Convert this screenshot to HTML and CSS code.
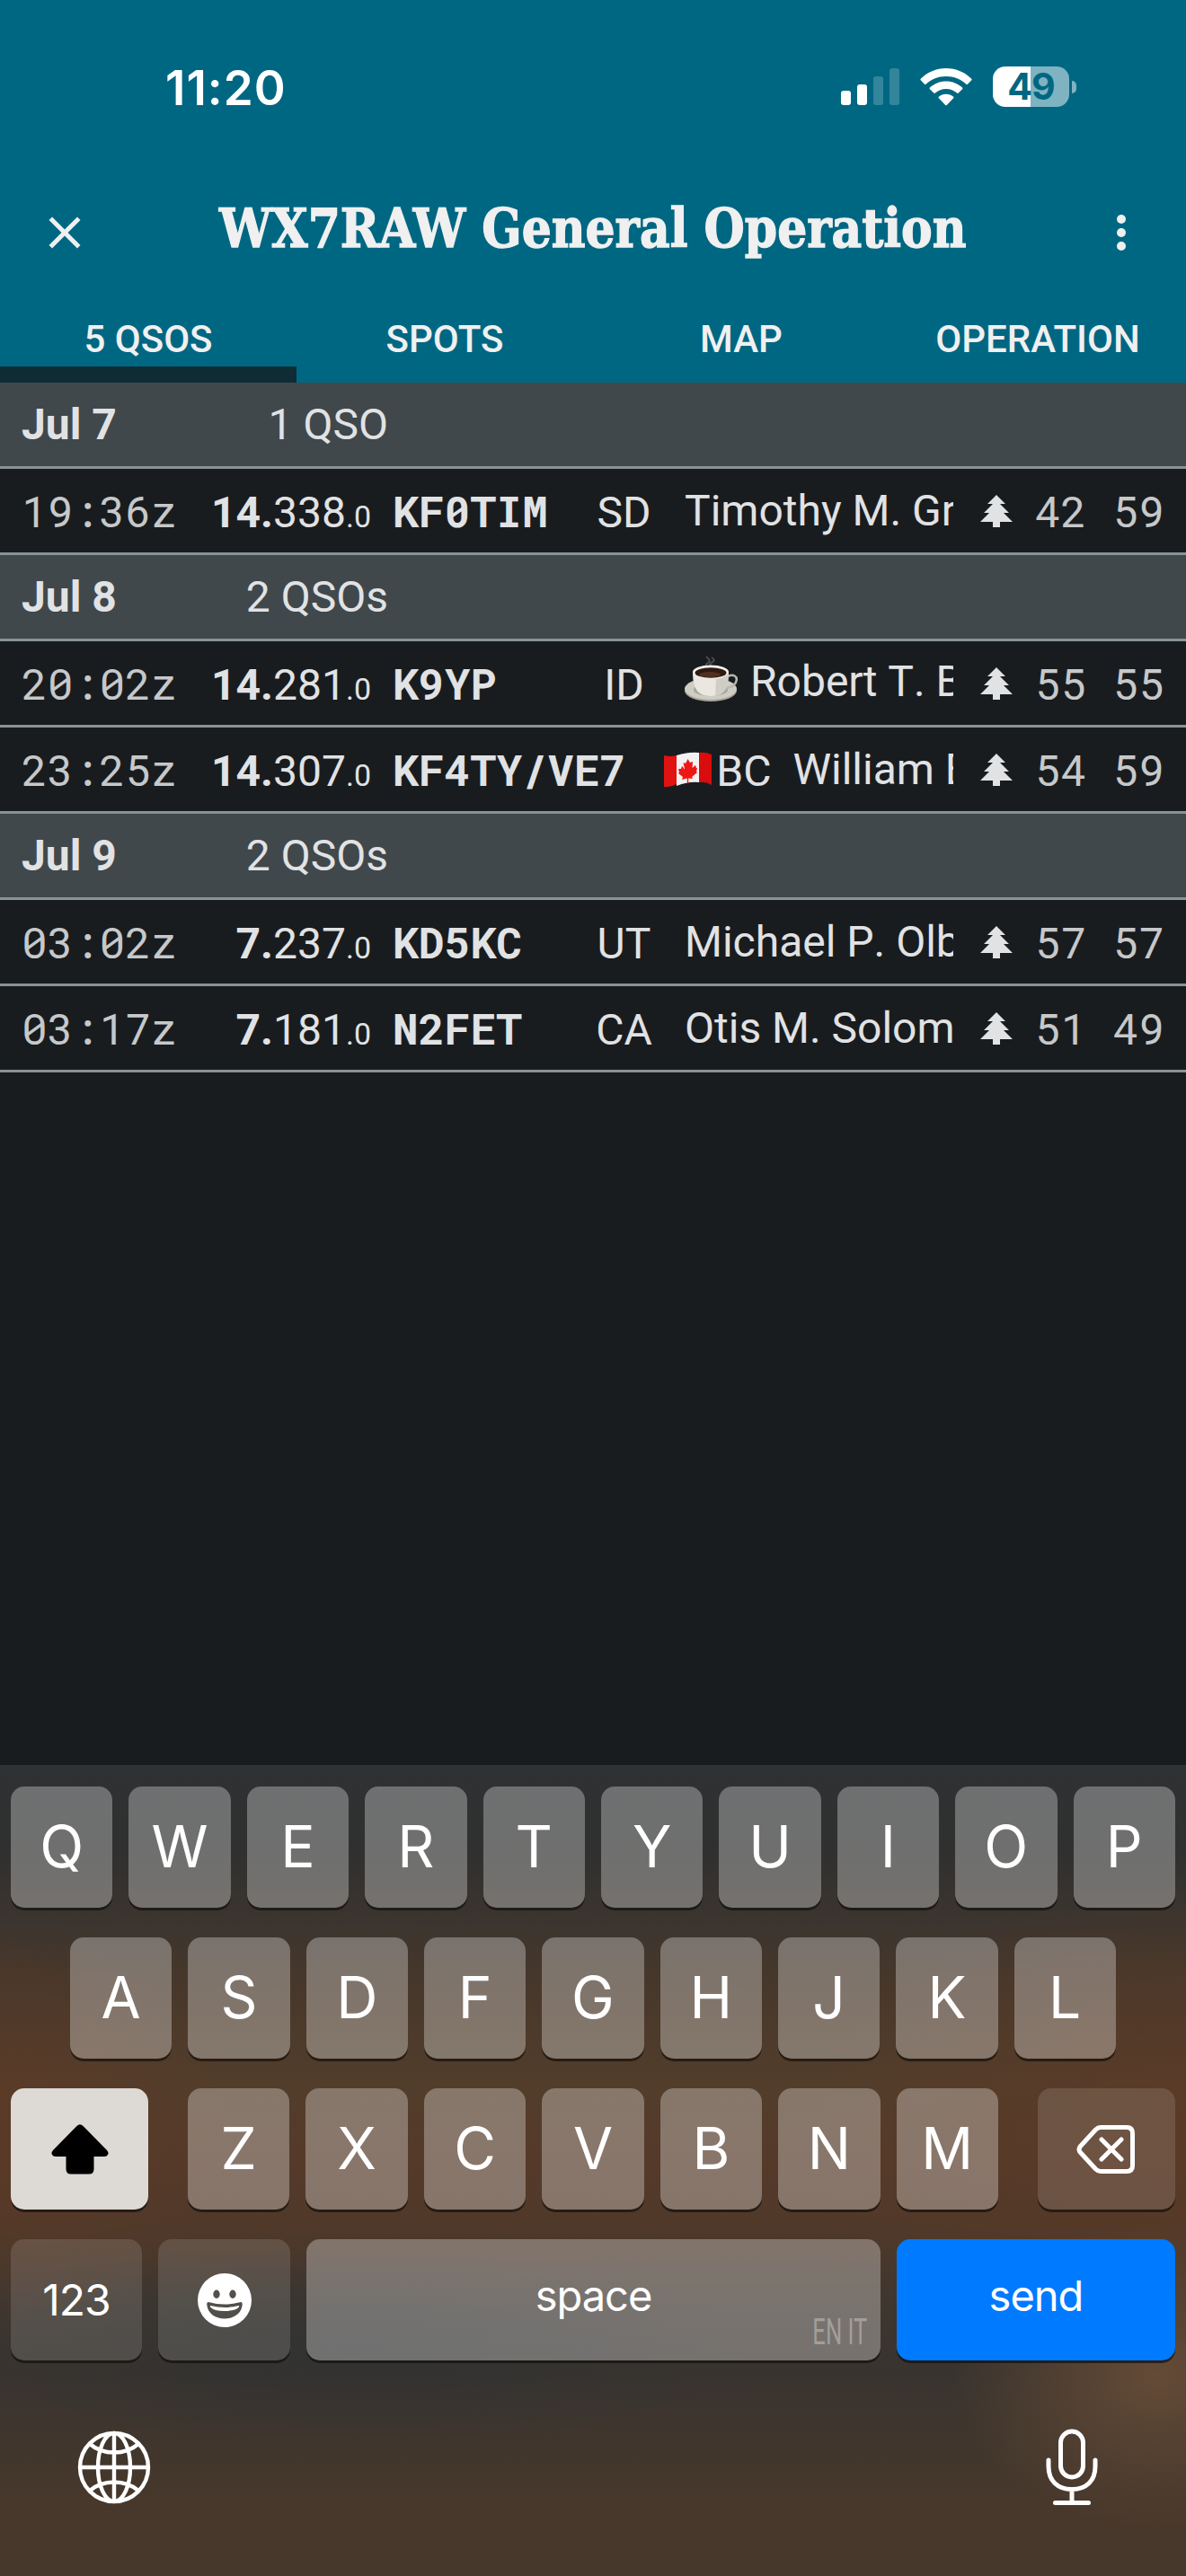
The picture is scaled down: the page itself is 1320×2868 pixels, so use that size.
FILE: index.html
```html
<!DOCTYPE html>
<html lang="en">
<head>
	<meta charset="UTF-8">
	<title>WX7RAW General Operation</title>
	<link rel="stylesheet" href="styles.css">
</head>
<body>

	<!-- shared icons -->
	<svg class="defs">
		<symbol id="icon-tree" viewBox="0 0 24 24"><path d="M10,21V18H3L8,13H5L10,8H7L12,3L17,8H14L19,13H16L21,18H14V21H10Z"/></symbol>
	</svg>

	<div class="header">
		<div class="status-bar">
			<span class="status-time">11:20</span>
			<div class="status-icons">
				<svg class="icon-signal" width="66" height="42" viewBox="0 0 66 42">
					<rect x="0" y="25" width="11" height="16" rx="3"/>
					<rect x="18" y="18" width="11" height="23" rx="3"/>
					<rect class="off" x="36" y="9" width="11" height="32" rx="3"/>
					<rect class="off" x="54" y="0" width="11" height="41" rx="3"/>
				</svg>
				<svg class="icon-wifi" width="58" height="42" viewBox="0 0 58 42">
					<path d="M29 0C18 0 8 4.500 .700 11.700Q0 12.500 .700 13.300L5 17.700Q5.800 18.400 6.600 17.700C12.500 12 20.300 8.900 29 8.900S45.500 12 51.400 17.700Q52.200 18.400 53 17.700L57.300 13.300Q58 12.500 57.300 11.700C50 4.500 40 0 29 0Z"/>
					<path d="M29 14.500C22 14.500 15.600 17.200 10.900 21.600Q10.100 22.400 10.900 23.200L15.300 27.600Q16.100 28.300 16.900 27.600C20.100 24.700 24.300 23 29 23S37.900 24.700 41.100 27.600Q41.900 28.300 42.700 27.600L47.100 23.200Q47.900 22.400 47.100 21.600C42.400 17.200 36 14.500 29 14.500Z"/>
					<path d="M29 28.800C25.800 28.800 23 29.900 20.800 31.700Q20 32.500 20.800 33.300L28.200 40.900Q29 41.600 29.800 40.900L37.200 33.300Q38 32.500 37.200 31.700C35 29.900 32.200 28.800 29 28.800Z"/>
				</svg>
				<div class="battery"><span class="battery-level">49</span></div>
			</div>
		</div>

		<div class="title-bar">
			<svg class="icon-btn" viewBox="0 0 24 24"><path d="M19,6.410L17.590,5L12,10.590L6.410,5L5,6.410L10.590,12L5,17.590L6.410,19L12,13.410L17.590,19L19,17.590L13.410,12L19,6.410Z"/></svg>
			<h1 class="title"><span>WX7RAW General Operation</span></h1>
			<svg class="icon-btn" viewBox="0 0 24 24"><circle cx="12" cy="6" r="2"/><circle cx="12" cy="12" r="2"/><circle cx="12" cy="18" r="2"/></svg>
		</div>

		<div class="tabs">
			<a class="tab active">5 QSOS</a>
			<a class="tab">SPOTS</a>
			<a class="tab">MAP</a>
			<a class="tab">OPERATION</a>
		</div>
	</div>

	<div class="log">
		<div class="day"><b>Jul 7</b><span class="count">1 QSO</span></div>
		<div class="qso">
			<span class="time">19:36z</span>
			<span class="freq"><b>14.</b>338<small>.0</small></span>
			<span class="call">KF0TIM</span>
			<span class="state">SD</span>
			<span class="name">Timothy M. Gr</span>
			<svg class="tree"><use href="#icon-tree"/></svg>
			<span class="rst">42</span><span class="rst">59</span>
		</div>
		<div class="day"><b>Jul 8</b><span class="count">2 QSOs</span></div>
		<div class="qso">
			<span class="time">20:02z</span>
			<span class="freq"><b>14.</b>281<small>.0</small></span>
			<span class="call">K9YP</span>
			<span class="state">ID</span>
			<span class="name with-icon">
				<svg class="coffee" viewBox="0 0 60 52">
					<path d="M25 14Q22 10 26 8T24 1M29 13Q27 9 31 7T30 2" fill="none" stroke="#4a4b4d" stroke-width="2"/>
					<ellipse cx="29" cy="39" rx="29" ry="12" fill="#a9a59b"/>
					<ellipse cx="29" cy="37" rx="29" ry="12" fill="#cfccc3"/>
					<ellipse cx="29" cy="38" rx="19" ry="7" fill="#aaa69c"/>
					<path d="M48 23C62 17 61 36 45 36" fill="none" stroke="#b9b6ad" stroke-width="2.500"/>
					<path d="M9 18C9 36 14 45 29 45S49 36 49 18Z" fill="#e9e7e0"/>
					<path d="M35 26Q45 25 49 18C49 36 44 43 34 45Z" fill="#d0cdc5"/>
					<ellipse cx="29" cy="18" rx="20" ry="7.500" fill="#f2f0eb"/>
					<ellipse cx="29" cy="19" rx="17.500" ry="5.800" fill="#2e1a10"/>
					<ellipse cx="28" cy="21" rx="12" ry="3" fill="#51301e"/>
				</svg>Robert T. B</span>
			<svg class="tree"><use href="#icon-tree"/></svg>
			<span class="rst">55</span><span class="rst">55</span>
		</div>
		<div class="qso">
			<span class="time">23:25z</span>
			<span class="freq"><b>14.</b>307<small>.0</small></span>
			<span class="call">KF4TY/VE7</span>
			<span class="state with-flag">
				<svg class="flag" viewBox="0 0 53 40">
					<path d="M0 4Q7 6 14 4V36Q7 40 0 39Z" fill="#e01212"/>
					<path d="M14 4Q26 0 39 1V34Q27 33 14 38Z" fill="#f2f2f2"/>
					<path d="M39 1Q46 0 53 3V37Q46 33 39 34Z" fill="#d90d0d"/>
					<path d="M26.500 8L29 12L32 11L31.500 18L35 15L36 18L37 18L36 22L37 23L31 28L32 30L27.200 29.500V35H25.800V29.500L20 31L21 28L16 24L17 23L16 19L19 19L20 16L23 19L21.500 12L24 13Z" fill="#f01616"/>
				</svg>BC</span>
			<span class="name">William B</span>
			<svg class="tree"><use href="#icon-tree"/></svg>
			<span class="rst">54</span><span class="rst">59</span>
		</div>
		<div class="day"><b>Jul 9</b><span class="count">2 QSOs</span></div>
		<div class="qso">
			<span class="time">03:02z</span>
			<span class="freq"><b>7.</b>237<small>.0</small></span>
			<span class="call">KD5KC</span>
			<span class="state">UT</span>
			<span class="name">Michael P. Olb</span>
			<svg class="tree"><use href="#icon-tree"/></svg>
			<span class="rst">57</span><span class="rst">57</span>
		</div>
		<div class="qso">
			<span class="time">03:17z</span>
			<span class="freq"><b>7.</b>181<small>.0</small></span>
			<span class="call">N2FET</span>
			<span class="state">CA</span>
			<span class="name">Otis M. Solom</span>
			<svg class="tree"><use href="#icon-tree"/></svg>
			<span class="rst">51</span><span class="rst">49</span>
		</div>
	</div>

	<div class="keyboard">
		<div class="key-row">
			<span class="key">Q</span><span class="key">W</span><span class="key">E</span><span class="key">R</span><span class="key">T</span><span class="key">Y</span><span class="key">U</span><span class="key">I</span><span class="key">O</span><span class="key">P</span>
		</div>
		<div class="key-row row-middle">
			<span class="key">A</span><span class="key">S</span><span class="key">D</span><span class="key">F</span><span class="key">G</span><span class="key">H</span><span class="key">J</span><span class="key">K</span><span class="key">L</span>
		</div>
		<div class="key-row">
			<span class="key key-shift">
				<svg width="64" height="56" viewBox="0 0 64 56"><path d="M28.500 2Q32 -1.500 35.500 2L62 29Q64.500 32 63 34Q62 36 59 36H47.500V50Q47.500 55.500 42 55.500H22Q16.500 55.500 16.500 50V36H5Q2 36 1 34Q-.500 32 2 29Z"/></svg>
			</span>
			<span class="key">Z</span><span class="key">X</span><span class="key">C</span><span class="key">V</span><span class="key">B</span><span class="key">N</span><span class="key">M</span>
			<span class="key key-dark key-delete">
				<svg width="66" height="56" viewBox="0 0 66 56" fill="none" stroke="#fff" stroke-width="5" stroke-linecap="round" stroke-linejoin="round"><path d="M27 3.500H56Q62.500 3.500 62.500 10V46Q62.500 52.500 56 52.500H27Q24 52.500 21.500 50L4.500 31.500Q1.500 28 4.500 24.500L21.500 6Q24 3.500 27 3.500ZM28 17L50 39M50 17L28 39"/></svg>
			</span>
		</div>
		<div class="key-row">
			<span class="key key-dark key-123">123</span>
			<span class="key key-dark key-emoji">
				<svg width="60" height="60" viewBox="0 0 60 60">
					<path fill-rule="evenodd" d="M30 0A30 30 0 1 1 30 60A30 30 0 1 1 30 0ZM21 18.500A3.700 4.700 0 1 0 21 27.900A3.700 4.700 0 1 0 21 18.500ZM39 18.500A3.700 4.700 0 1 0 39 27.900A3.700 4.700 0 1 0 39 18.500ZM12 32Q10 32 10.300 35C11 44 19 50.500 30 50.500S49 44 49.700 35Q50 32 48 32Q39 34.500 30 34.500T12 32Z"/>
					<path d="M14.500 36Q22 38 30 38T45.500 36Q46.500 36 46 37.500Q42 42 30 42T14 37.500Q13.500 36 14.500 36Z"/>
				</svg>
			</span>
			<span class="key key-space">space<span class="lang">EN IT</span></span>
			<span class="key key-send">send</span>
		</div>
		<div class="key-footer">
			<svg width="82" height="82" viewBox="0 0 82 82" fill="none" stroke="#fff" stroke-width="4.400">
				<circle cx="41" cy="41" r="38"/>
				<ellipse cx="41" cy="41" rx="18" ry="38"/>
				<path d="M41 3V79M3 41H79M14 15Q25 24.500 41 24.500T68 15M14 67Q25 57.500 41 57.500T68 67"/>
			</svg>
			<svg width="58" height="86" viewBox="0 0 58 86" fill="none" stroke="#fff" stroke-width="5" stroke-linecap="round">
				<rect x="16.500" y="3" width="25" height="51" rx="12.500"/>
				<path d="M3 35V42C3 58 13 67.500 29 67.500S55 58 55 42V35M29 67.500V82M10.500 82.500H47.500"/>
			</svg>
		</div>
	</div>

</body>
</html>
```

FILE: styles.css
```css
body{
	display: flex;
	flex-direction: column;
	width: 1320px;
	height: 2868px;
	background: #191c1e;
	color: #e1e2e4;
	font-family: Roboto, sans-serif;
	font-size: 48px;
	line-height: 1.2;
	overflow: hidden;
}
body, h1, svg{ margin: 0; padding: 0; }
svg{ display: block; flex: none; }
.defs{ display: none; }

/* header */
.header{
	height: 426px;
	background: #006783;
	color: #f0f0f0;
}
.status-bar{
	display: flex;
	justify-content: space-between;
	box-sizing: border-box;
	height: 195px;
	padding: 66px 130px 0 184px;
	color: #fff;
}
.status-time{
	font: 600 53px/64px Inter, sans-serif;
	letter-spacing: 1px;
}
.status-icons{
	display: flex;
	align-items: center;
	height: 61px;
	fill: #fff;
}
.icon-signal .off{ opacity: .2; }
.icon-wifi{ margin: 0 23px 0 22px; }

.battery{
	display: flex;
	justify-content: center;
	position: relative;
	width: 85px;
	height: 45px;
	border-radius: 14px;
	background: linear-gradient(90deg, #fff 42px, #80b3c1 42px);
}
.battery:after{
	content: '';
	position: absolute;
	left: 88px;
	top: 16px;
	width: 5px;
	height: 14px;
	border-radius: 0 5px 5px 0;
	background: #80b3c1;
}
.battery-level{
	color: #006783;
	font: 700 41px/45px Inter, sans-serif;
	letter-spacing: -1px;
}

.title-bar{
	display: flex;
	align-items: center;
	justify-content: space-between;
	height: 128px;
	padding: 0 42px;
	fill: #f0f0f0;
}
.icon-btn{ width: 60px; height: 60px; }
.title{
	width: 832px;
	padding-bottom: 8px;
	font: 700 59px/72px "Roboto Slab", "DejaVu Serif", serif;
	white-space: nowrap;
}
.title span{
	display: inline-block;
	transform: scaleX(.881);
	transform-origin: left;
	-webkit-text-stroke: 1.400px #f0f0f0;
}

.tabs{
	display: flex;
	height: 103px;
}
.tab{
	box-sizing: border-box;
	width: 330px;
	height: 103px;
	padding-top: 24px;
	border-bottom: 18px solid transparent;
	font-size: 42px;
	font-weight: 500;
	line-height: 61px;
	text-align: center;
}
.tab.active{ border-bottom-color: #0f2c34; }

/* log list */
.log{ flex: 1; }
.day,
.qso{
	display: flex;
	box-sizing: border-box;
	height: 96px;
	padding: 0 24px;
	border-bottom: 3px solid #899295;
	line-height: 93px;
	white-space: nowrap;
}
.day{ background: #40484b; }
.day b{ width: 173px; }
.day .count{
	width: 235px;
	text-align: right;
}

.qso{ line-height: 97px; }
.time,
.call,
.rst{
	flex: none;
	font-family: "Roboto Mono", "Liberation Mono", monospace;
	line-height: 93px;
}
.time{ width: 173px; color: #c6c8ca; }
.freq{
	width: 216px;
	text-align: right;
}
.freq small{ font-size: 34px; }
.call{
	min-width: 216px;
	margin-left: 24px;
	font-weight: 700;
}
.state{
	flex: none;
	width: 83px;
	text-align: center;
}
.state.with-flag{
	display: flex;
	width: auto;
	margin-left: 43px;
}
.flag{
	width: 53px;
	height: 40px;
	margin: 27px 5px 0 0;
}
.name{
	flex: 1;
	margin-left: 26px;
	line-height: 93px;
	font-kerning: none;
	overflow: hidden;
}
.name.with-icon{
	display: flex;
	line-height: 89px;
}
.with-flag + .name{ margin-left: 24px; }
.coffee{
	width: 60px;
	height: 52px;
	margin: 16px 13px 0 0;
}
.tree{
	width: 48px;
	height: 48px;
	margin: 23px 19px 0 24px;
	fill: #e1e2e4;
}
.rst{ color: #c6c8ca; }
.rst + .rst{ margin-left: 29px; }

/* keyboard */
.keyboard{
	box-sizing: border-box;
	height: 903px;
	padding: 24px 12px 0;
	background:
		radial-gradient(ellipse 230px 170px at 1290px 680px, #654b36, transparent),
		radial-gradient(ellipse 420px 260px at 1320px 400px, rgba(92,58,38,.800), transparent),
		radial-gradient(ellipse 260px 220px at 0 400px, rgba(92,58,38,.800), transparent),
		radial-gradient(ellipse 460px 110px at 400px 650px, rgba(46,50,52,.700), transparent),
		linear-gradient(#303133, #2f302f 90px, #3a342f 165px, #46372b 235px, #523d2b 350px, #553a2a 440px, #503929 510px, #40372f 590px, #38332f 675px, #40362d 750px, #48382b 830px, #47382c);
	color: #fff;
	font-family: Inter, sans-serif;
}
.key-row{
	display: flex;
	justify-content: space-between;
	height: 135px;
	margin-bottom: 33px;
}
.key-row.row-middle{ padding: 0 66px; }
.key{
	display: flex;
	align-items: center;
	justify-content: center;
	width: 113.400px;
	height: 135px;
	border-radius: 15px;
	background: rgba(255,255,255,.305);
	box-shadow: 0 3px 0 rgba(20,16,12,.700);
	font-size: 64px;
}
.key-dark{ background: rgba(255,255,255,.130); }
.key-shift{
	width: 153px;
	margin-right: 26px;
	background: #ddd9d5;
	fill: #000;
}
.key-delete{ width: 153px; margin-left: 26px; }
.key-123{ width: 146px; font-size: 48px; letter-spacing: -1px; }
.key-emoji{ width: 147px; fill: #fff; }
.key-space,
.key-send{
	box-sizing: border-box;
	padding-bottom: 9px;
	font-size: 47px;
	letter-spacing: -1px;
}
.key-space{
	position: relative;
	width: 639px;
}
.key-space .lang{
	position: absolute;
	right: 15px;
	bottom: 7px;
	color: rgba(255,255,255,.330);
	font: 40px/48px Roboto, sans-serif;
	letter-spacing: 0;
	transform: scaleX(.640);
	transform-origin: right;
}
.key-send{ width: 310px; background: #007aff; }

.key-footer{
	display: flex;
	align-items: center;
	justify-content: space-between;
	height: 86px;
	margin-top: 76px;
	padding: 0 86px 0 74px;
}
```
